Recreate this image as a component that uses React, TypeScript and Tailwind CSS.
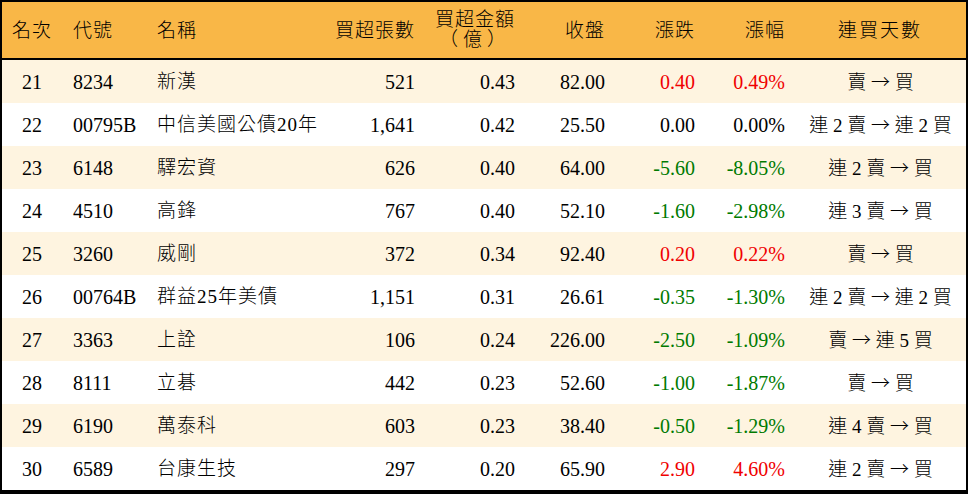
import React from "react";

const rows = [
  { rank: 21, code: "8234", name: "新漢", vol: "521", amt: "0.43", close: "82.00", chg: "0.40", pct: "0.49%", days: "賣 → 買" },
  { rank: 22, code: "00795B", name: "中信美國公債20年", vol: "1,641", amt: "0.42", close: "25.50", chg: "0.00", pct: "0.00%", days: "連 2 賣 → 連 2 買" },
  { rank: 23, code: "6148", name: "驛宏資", vol: "626", amt: "0.40", close: "64.00", chg: "-5.60", pct: "-8.05%", days: "連 2 賣 → 買" },
  { rank: 24, code: "4510", name: "高鋒", vol: "767", amt: "0.40", close: "52.10", chg: "-1.60", pct: "-2.98%", days: "連 3 賣 → 買" },
  { rank: 25, code: "3260", name: "威剛", vol: "372", amt: "0.34", close: "92.40", chg: "0.20", pct: "0.22%", days: "賣 → 買" },
  { rank: 26, code: "00764B", name: "群益25年美債", vol: "1,151", amt: "0.31", close: "26.61", chg: "-0.35", pct: "-1.30%", days: "連 2 賣 → 連 2 買" },
  { rank: 27, code: "3363", name: "上詮", vol: "106", amt: "0.24", close: "226.00", chg: "-2.50", pct: "-1.09%", days: "賣 → 連 5 買" },
  { rank: 28, code: "8111", name: "立碁", vol: "442", amt: "0.23", close: "52.60", chg: "-1.00", pct: "-1.87%", days: "賣 → 買" },
  { rank: 29, code: "6190", name: "萬泰科", vol: "603", amt: "0.23", close: "38.40", chg: "-0.50", pct: "-1.29%", days: "連 4 賣 → 買" },
  { rank: 30, code: "6589", name: "台康生技", vol: "297", amt: "0.20", close: "65.90", chg: "2.90", pct: "4.60%", days: "連 2 賣 → 買" },
];

const grid = "grid grid-cols-[60px_84px_179px_90px_100px_90px_90px_90px_1fr] items-center";
const cjk = "text-[19px] tracking-[1px] font-light";

const toneOf = (v: string) => {
  const n = parseFloat(v);
  if (n > 0) return "text-[#f00000]";
  if (n < 0) return "text-[#007a00]";
  return "text-black";
};

// split the streak text so the arrow gets a longer glyph
const Days = ({ text }: { text: string }) => {
  const [left, right] = text.split(" → ");
  return (
    <>
      {left}{" "}
      <span style={{ fontFamily: '"Noto Sans CJK TC", sans-serif' }}>→</span>{" "}
      {right}
    </>
  );
};

export default function App() {
  return (
    <div
      className="w-[968px] h-[496px] bg-white text-black text-[20px] leading-none"
      style={{ fontFamily: '"Liberation Serif", "Noto Sans CJK TC", serif' }}
    >
      <div className="border-2 border-b-4 border-black">
        {/* Header */}
        <div className={`${grid} h-[58px] bg-[#f9b747] border-b-2 border-black ${cjk}`}>
          <div className="text-center">名次</div>
          <div className="pl-[11px]">代號</div>
          <div className="pl-[11px]">名稱</div>
          <div className="text-right">買超張數</div>
          <div className="text-right leading-[20px]">
            <div>買超金額</div>
            <div className="pr-[4px] tracking-[5px]">（億）</div>
          </div>
          <div className="text-right">收盤</div>
          <div className="text-right">漲跌</div>
          <div className="text-right">漲幅</div>
          <div className="text-center pl-[9px] tracking-[2px]">連買天數</div>
        </div>

        {/* Rows */}
        {rows.map((r, i) => (
          <div key={r.rank} className={`${grid} h-[43px] ${i % 2 === 0 ? "bg-[#fef4e0]" : "bg-white"}`}>
            <div className="text-center">{r.rank}</div>
            <div className="pl-[11px]">{r.code}</div>
            <div className={`pl-[11px] ${cjk}`}>{r.name}</div>
            <div className="text-right">{r.vol}</div>
            <div className="text-right">{r.amt}</div>
            <div className="text-right">{r.close}</div>
            <div className={`text-right ${toneOf(r.chg)}`}>{r.chg}</div>
            <div className={`text-right ${toneOf(r.chg)}`}>{r.pct}</div>
            <div className="text-center pl-[10px] text-[19px] font-light whitespace-nowrap">
              <Days text={r.days} />
            </div>
          </div>
        ))}
      </div>
    </div>
  );
}
